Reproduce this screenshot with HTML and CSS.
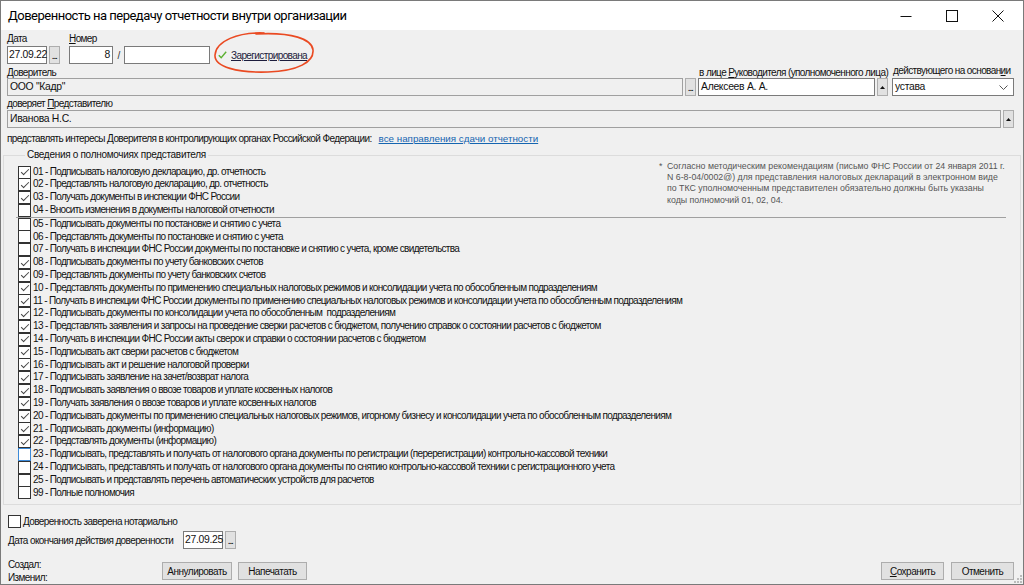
FILE: index.html
```html
<!DOCTYPE html>
<html lang="ru">
<head>
<meta charset="utf-8">
<title>Доверенность</title>
<link rel="stylesheet" href="styles.css">
</head>
<body>
<div class="window">
  <div class="titlebar">
    <div class="title">Доверенность на передачу отчетности внутри организации</div>
    <div class="controls">
      <span class="ctl"><svg width="12" height="12" viewBox="0 0 12 12"><path d="M0.5 6.5h11" stroke="#111" stroke-width="1"/></svg></span>
      <span class="ctl"><svg width="12" height="12" viewBox="0 0 12 12"><rect x="0.5" y="0.5" width="11" height="11" fill="none" stroke="#111" stroke-width="1"/></svg></span>
      <span class="ctl"><svg width="12" height="12" viewBox="0 0 12 12"><path d="M0.5 0.5L11.5 11.5M11.5 0.5L0.5 11.5" stroke="#111" stroke-width="1"/></svg></span>
    </div>
  </div>
  <div class="body">
    <div class="row row1">
      <div class="field">
        <div class="lbl"><u>Д</u>ата</div>
        <div class="line">
          <div class="inp w-date">27.09.22</div>
          <div class="btn-sm dots">...</div>
        </div>
      </div>
      <div class="field f-num">
        <div class="lbl"><u>Н</u>омер</div>
        <div class="line">
          <div class="inp w-num right">8</div>
          <span class="slash">/</span>
          <div class="inp w-num2"></div>
        </div>
      </div>
      <div class="reg">
        <svg class="tick" width="9" height="8" viewBox="0 0 9 8"><path d="M0.8 4.2L3.2 6.8L8.2 0.8" fill="none" stroke="#5cb032" stroke-width="1.4"/></svg>
        <a class="reglink">Зарегистрирована</a>
        <svg class="oval" width="104" height="44" viewBox="0 0 104 44"><path d="M52 2C26 1 4 10 3 24C2 36 26 42 56 41C86 40 102 31 101 19C100 8 80 1 44 3" fill="none" stroke="#ea4a22" stroke-width="1.6" stroke-linecap="round"/></svg>
      </div>
    </div>

    <div class="row row2">
      <div class="field grow">
        <div class="lbl"><u>Д</u>оверитель</div>
        <div class="line">
          <div class="inp ro grow">ООО "Кадр"</div>
          <div class="btn-sm dots">...</div>
        </div>
      </div>
      <div class="field f-ruk">
        <div class="lbl lbl-ruk">в лице <u>Р</u>уководителя (уполномоченного лица)</div>
        <div class="line">
          <div class="inp grow">Алексеев А. А.</div>
          <div class="btn-sm tri"><svg width="5" height="3" viewBox="0 0 5 3"><path d="M0 3L2.5 0L5 3Z" fill="#111"/></svg></div>
        </div>
      </div>
      <div class="field f-osn">
        <div class="lbl lbl-osn">действующего на основан<u>и</u>и</div>
        <div class="line">
          <div class="inp grow sel">устава<svg class="chev" width="9" height="5" viewBox="0 0 9 5"><path d="M0.5 0.5L4.5 4.5L8.5 0.5" fill="none" stroke="#555" stroke-width="1"/></svg></div>
        </div>
      </div>
    </div>

    <div class="row row3">
      <div class="field grow">
        <div class="lbl">доверяет <u>П</u>редставителю</div>
        <div class="line">
          <div class="inp ro grow">Иванова Н.С.</div>
          <div class="btn-sm tri"><svg width="5" height="3" viewBox="0 0 5 3"><path d="M0 3L2.5 0L5 3Z" fill="#111"/></svg></div>
        </div>
      </div>
    </div>

    <div class="row row4">
      <span>представлять интересы Доверителя в контролирующих органах Российской Федерации:</span>
      <a class="link">все направления сдачи отчетности</a>
    </div>

    <fieldset class="group">
      <legend>Сведения о полномочиях представителя</legend>
      <div class="top">
        <div class="list">
          <div class="item"><span class="cb on"></span>01 - Подписывать налоговую декларацию, др. отчетность</div>
          <div class="item"><span class="cb on"></span>02 - Представлять налоговую декларацию, др. отчетность</div>
          <div class="item"><span class="cb on"></span>03 - Получать документы в инспекции ФНС России</div>
          <div class="item"><span class="cb"></span>04 - Вносить изменения в документы налоговой отчетности</div>
        </div>
        <div class="note">
          <span class="star">*</span>
          <p>Согласно методическим рекомендациям (письмо ФНС России от 24 января 2011 г.<br>N 6-8-04/0002@) для представления налоговых деклараций в электронном виде<br>по ТКС уполномоченным представителен обязательно должны быть указаны<br>коды полномочий 01, 02, 04.</p>
        </div>
      </div>
      <div class="sep"></div>
      <div class="list">
        <div class="item"><span class="cb"></span>05 - Подписывать документы по постановке и снятию с учета</div>
        <div class="item"><span class="cb"></span>06 - Представлять документы по постановке и снятию с учета</div>
        <div class="item"><span class="cb"></span>07 - Получать в инспекции ФНС России документы по постановке и снятию с учета, кроме свидетельства</div>
        <div class="item"><span class="cb on"></span>08 - Подписывать документы по учету банковских счетов</div>
        <div class="item"><span class="cb on"></span>09 - Представлять документы по учету банковских счетов</div>
        <div class="item"><span class="cb on"></span>10 - Представлять документы по применению специальных налоговых режимов и консолидации учета по обособленным подразделениям</div>
        <div class="item"><span class="cb on"></span>11 - Получать в инспекции ФНС России документы по применению специальных налоговых режимов и консолидации учета по обособленным подразделениям</div>
        <div class="item"><span class="cb on"></span>12 - Подписывать документы по консолидации учета по обособленным&nbsp; подразделениям</div>
        <div class="item"><span class="cb on"></span>13 - Представлять заявления и запросы на проведение сверки расчетов с бюджетом, получению справок о состоянии расчетов с бюджетом</div>
        <div class="item"><span class="cb on"></span>14 - Получать в инспекции ФНС России акты сверок и справки о состоянии расчетов с бюджетом</div>
        <div class="item"><span class="cb on"></span>15 - Подписывать акт сверки расчетов с бюджетом</div>
        <div class="item"><span class="cb on"></span>16 - Подписывать акт и решение налоговой проверки</div>
        <div class="item"><span class="cb on"></span>17 - Подписывать заявление на зачет/возврат налога</div>
        <div class="item"><span class="cb on"></span>18 - Подписывать заявления о ввозе товаров и уплате косвенных налогов</div>
        <div class="item"><span class="cb on"></span>19 - Получать заявления о ввозе товаров и уплате косвенных налогов</div>
        <div class="item"><span class="cb on"></span>20 - Подписывать документы по применению специальных налоговых режимов, игорному бизнесу и консолидации учета по обособленным подразделениям</div>
        <div class="item"><span class="cb on"></span>21 - Подписывать документы (информацию)</div>
        <div class="item"><span class="cb on"></span>22 - Представлять документы (информацию)</div>
        <div class="item"><span class="cb focus"></span>23 - Подписывать, представлять и получать от налогового органа документы по регистрации (перерегистрации) контрольно-кассовой техники</div>
        <div class="item"><span class="cb"></span>24 - Подписывать, представлять и получать от налогового органа документы по снятию контрольно-кассовой техники с регистрационного учета</div>
        <div class="item"><span class="cb"></span>25 - Подписывать и представлять перечень автоматических устройств для расчетов</div>
        <div class="item"><span class="cb"></span>99 - Полные полномочия</div>
      </div>
    </fieldset>

    <div class="notary"><span class="cb"></span><u>Д</u>оверенность заверена нотариально</div>

    <div class="enddate">
      <span class="end-lbl">Дата окончания действия доверенности</span>
      <div class="inp w-date">27.09.25</div>
      <div class="btn-sm dots">...</div>
    </div>

    <div class="footer">
      <div class="meta">
        <div>Создал:</div>
        <div>Изменил:</div>
      </div>
      <button class="btn w70">Аннулировать</button>
      <button class="btn w69">Напечатать</button>
      <div class="grow"></div>
      <button class="btn w63"><u>С</u>охранить</button>
      <button class="btn w63">Отменить</button>
    </div>
  </div>
  <svg class="grip" width="10" height="10" viewBox="0 0 10 10">
    <rect x="8" y="2" width="2" height="2" fill="#bbb"/><rect x="5" y="5" width="2" height="2" fill="#bbb"/><rect x="8" y="5" width="2" height="2" fill="#bbb"/>
    <rect x="2" y="8" width="2" height="2" fill="#bbb"/><rect x="5" y="8" width="2" height="2" fill="#bbb"/><rect x="8" y="8" width="2" height="2" fill="#bbb"/>
  </svg>
</div>
</body>
</html>
```

FILE: styles.css
```css
* { box-sizing: border-box; }
html, body { margin: 0; padding: 0; }
body {
  width: 1024px;
  height: 585px;
  overflow: hidden;
  background: #f0f0f0;
  font-family: "Liberation Sans", Arial, sans-serif;
  font-size: 10px;
  letter-spacing: -0.6px;
  color: #111;
}
.window {
  position: relative;
  width: 1024px;
  height: 585px;
  border: 1px solid #7a7a7a;
  background: #f0f0f0;
  display: flex;
  flex-direction: column;
}
.titlebar {
  height: 29px;
  background: #fff;
  display: flex;
  align-items: center;
  justify-content: space-between;
  flex: none;
}
.title {
  font-family: Roboto, "Noto Sans", sans-serif;
  font-size: 13px;
  letter-spacing: -0.5px;
  color: #000;
  padding-left: 7px;
}
.controls { display: flex; height: 100%; padding-right: 2px; }
.ctl {
  width: 46px;
  height: 100%;
  display: flex;
  align-items: center;
  justify-content: center;
}
.body {
  flex: 1;
  display: flex;
  flex-direction: column;
  padding: 3px 9px 0 6px;
}
.row { display: flex; align-items: flex-end; }
.field { display: flex; flex-direction: column; }
.lbl { line-height: 12px; height: 12px; white-space: nowrap; }
.row1 .lbl { height: 13px; line-height: 12px; }
.line { display: flex; align-items: center; }
.grow { flex: 1; min-width: 0; }
.inp {
  height: 18px;
  border: 1px solid #7a7a7a;
  background: #fff;
  line-height: 16px;
  padding: 0 2px;
  white-space: nowrap;
  font-size: 10.4px;
  letter-spacing: -0.3px;
}
.inp.ro { background: #f0f0f0; border-color: #a0a0a0; }
.inp.right { text-align: right; }
.w-date { width: 40px; padding: 0 1px; }
.w-num { width: 44px; }
.w-num2 { width: 86px; }
.btn-sm {
  width: 11px;
  height: 18px;
  margin-left: 2px;
  border: 1px solid #adadad;
  background: #e1e1e1;
  display: flex;
  justify-content: center;
  flex: none;
}
.btn-sm.dots {
  align-items: flex-end;
  line-height: 9px;
  font-weight: bold;
  font-size: 8px;
  letter-spacing: -0.6px;
  padding-bottom: 2px;
}
.btn-sm.tri { align-items: center; }
.f-num { margin-left: 9px; }
.slash { width: 11px; text-align: center; color: #333; }
.reg {
  position: relative;
  display: flex;
  align-items: center;
  height: 18px;
  margin-left: 8px;
}
.tick { margin-right: 4px; }
.reglink { color: #1c1c3c; text-decoration: underline; }
.oval { position: absolute; left: -6px; top: -15px; }

.row2 { margin-top: 3px; }
.row2 .lbl { height: 11px; line-height: 12px; }
.f-ruk { width: 190px; margin-left: 2px; }
.lbl-ruk { padding-left: 1px; }
.f-osn { width: 122px; margin-left: 4px; }
.lbl-osn { padding-left: 1px; margin-top: -2px; margin-bottom: 2px; }
.sel { display: flex; align-items: center; justify-content: space-between; padding-right: 5px; }
.row3 { margin-top: 1px; }
.row3 .lbl { height: 13px; line-height: 14px; }
.row4 { margin-top: 5px; height: 12px; line-height: 12px; align-items: center; }
.link {
  margin-left: 7px;
  color: #1565b0;
  text-decoration: underline;
  font-size: 9.8px;
  letter-spacing: 0;
}

.group {
  margin: 4px -7px 0 -4px;
  border: 1px solid #dcdcdc;
  padding: 4.6px 9px 5px 14px;
  min-width: 0;
}
.group legend { padding: 0 2px; margin-left: 7px; line-height: 12px; letter-spacing: -0.3px; }
.top { display: flex; }
.list { display: flex; flex-direction: column; letter-spacing: -0.66px; }
.top .list { width: 641px; }
.item {
  height: 12.8px;
  line-height: 12.8px;
  display: flex;
  align-items: center;
  white-space: nowrap;
}
.cb {
  position: relative;
  width: 13px;
  height: 13px;
  border: 1px solid #333;
  background: #fff;
  margin-right: 2px;
  flex: none;
}
.cb.focus { border-color: #3c8ad8; }
.cb.on::after {
  content: "";
  position: absolute;
  left: 3.5px;
  top: 0.5px;
  width: 3px;
  height: 7px;
  border-right: 1px solid #444;
  border-bottom: 1px solid #444;
  transform: rotate(45deg);
}
.note {
  display: flex;
  color: #555;
  font-size: 8.8px;
  letter-spacing: 0;
  line-height: 11.33px;
  margin-top: -5px;
  white-space: nowrap;
}
.star { width: 8px; flex: none; }
.note p { margin: 0; }
.sep { height: 1px; background: #a0a0a0; margin-right: 5px; margin-left: -2px; }

.notary { margin-top: 9px; display: flex; align-items: center; height: 14px; }
.notary .cb { margin-left: 1px; margin-right: 2px; }
.enddate { display: flex; align-items: center; margin-top: 3px; }
.end-lbl { width: 176px; padding-left: 1px; white-space: nowrap; }
.footer { display: flex; align-items: flex-start; margin-top: 9px; }
.meta { width: 155px; line-height: 13px; padding-left: 1px; }
.btn {
  font-family: "Liberation Sans", Arial, sans-serif;
  font-size: 10px;
  letter-spacing: -0.5px;
  height: 18px;
  margin-top: 4px;
  padding: 0;
  border: 1px solid #adadad;
  background: #e1e1e1;
  color: #111;
  margin-right: 6px;
}
.w70 { width: 70px; }
.w69 { width: 69px; }
.w63 { width: 63px; margin-right: 7px; }
.btn:last-child { margin-right: 0; }
.grip { position: absolute; right: 1px; bottom: 1px; }
```
